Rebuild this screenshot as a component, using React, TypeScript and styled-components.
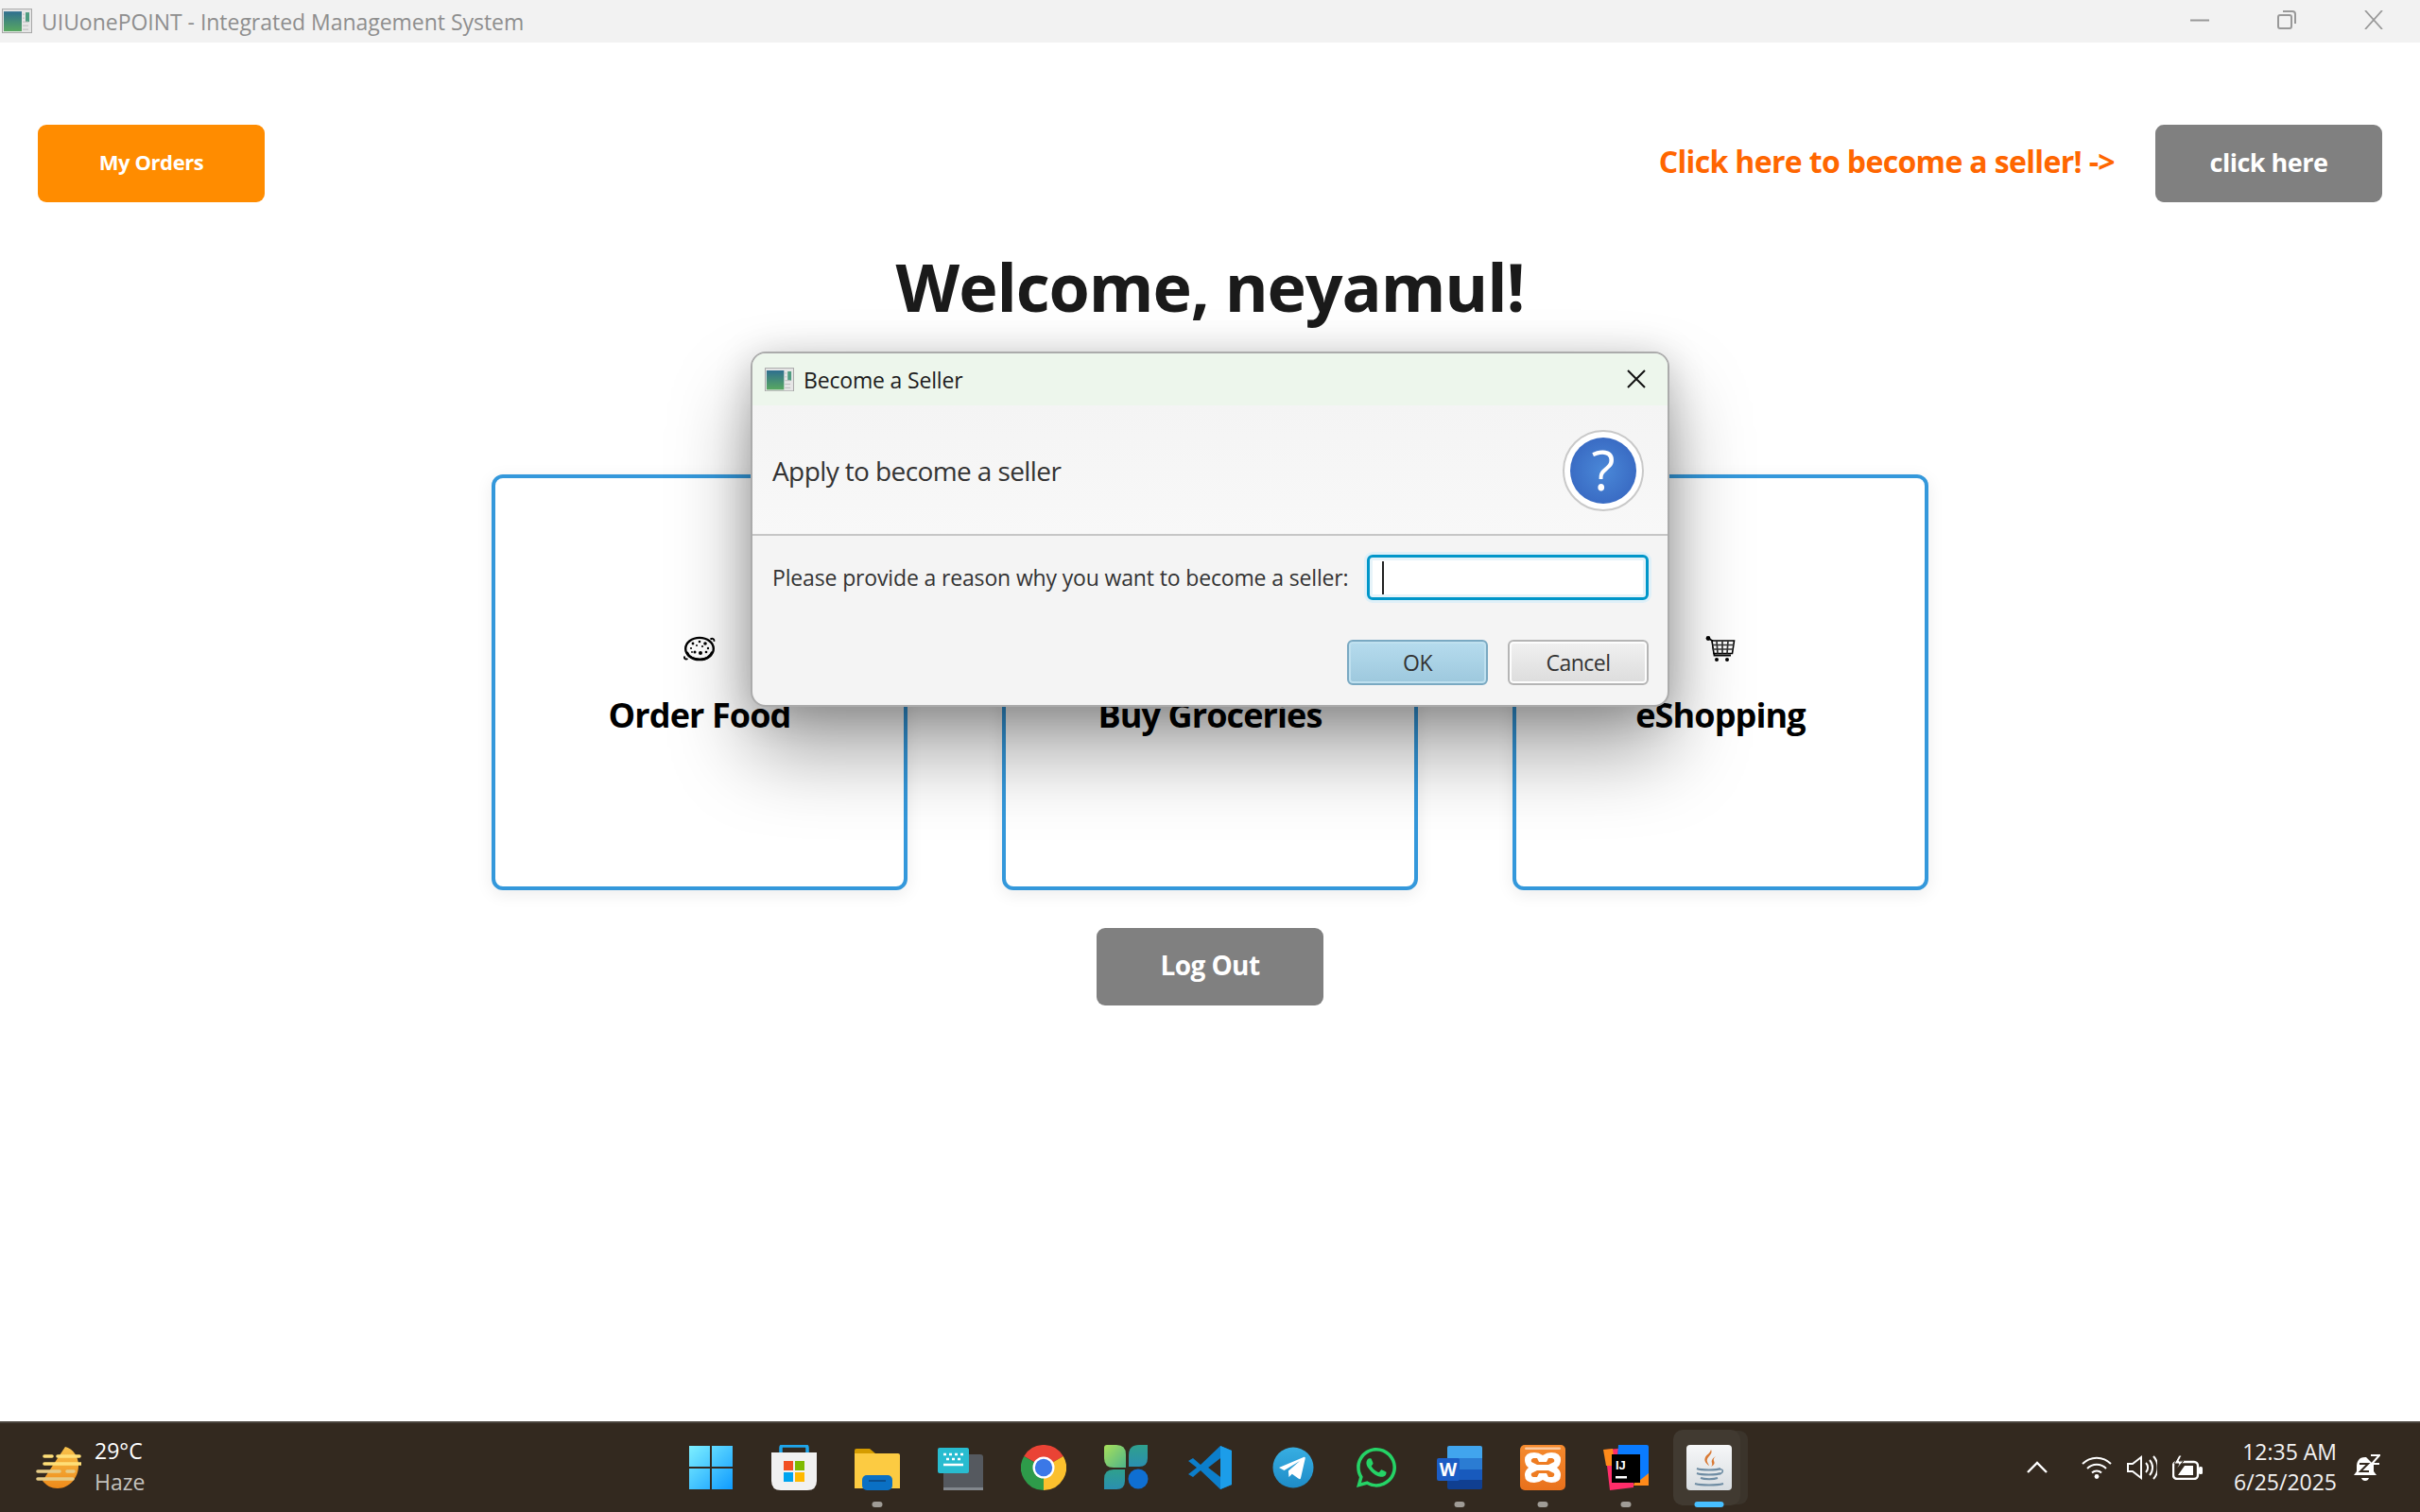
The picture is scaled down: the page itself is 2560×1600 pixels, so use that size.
import React from "react";
import styled, { createGlobalStyle } from "styled-components";
import { FaWhatsapp } from "react-icons/fa";

const FONT = `"Open Sans", "Noto Sans", "Liberation Sans", sans-serif`;

const Global = createGlobalStyle`
  html, body { margin: 0; padding: 0; background: #fff; }
  #root { height: 1600px; }
  * { box-sizing: border-box; }
`;

const Page = styled.div`
  position: relative;
  width: 2560px;
  height: 1600px;
  display: flex;
  flex-direction: column;
  overflow: hidden;
  font-family: ${FONT};
  background: #fff;
`;

const TitleBar = styled.header`
  height: 45px;
  flex: none;
  display: flex;
  align-items: center;
  background: #f2f2f2;
  padding: 0 3px 0 2px;
`;
const TitleText = styled.span`
  margin-left: 10px;
  font-size: 23px;
  letter-spacing: -0.03px;
  color: #8e8e8e;
`;
const WindowControls = styled.div`
  margin-left: auto;
  display: flex;
`;
const WindowControl = styled.div`
  width: 92px;
  height: 45px;
  display: flex;
  align-items: center;
  justify-content: center;
  padding-bottom: 4px;
`;

const Main = styled.main`
  flex: 1;
  display: flex;
  flex-direction: column;
  align-items: center;
  padding: 87px 40px 0;
`;
const TopRow = styled.div`
  width: 100%;
  display: flex;
  align-items: center;
  justify-content: space-between;
`;
const SellerGroup = styled.div`
  display: flex;
  align-items: center;
  gap: 43px;
`;
const SellerPrompt = styled.span`
  font-size: 32px;
  font-weight: 700;
  letter-spacing: -0.65px;
  color: #ff6600;
  margin-bottom: 5px;
`;
const ActionButton = styled.button<{ $bg: string; $size: number; $track?: number }>`
  width: 240px;
  height: 82px;
  border: 0;
  border-radius: 9px;
  background: ${(p) => p.$bg};
  color: #fff;
  font-family: ${FONT};
  font-weight: 700;
  font-size: ${(p) => p.$size}px;
  letter-spacing: ${(p) => p.$track ?? 0}px;
  padding: 0 0 4px;
`;
const Welcome = styled.h1`
  margin: 41px 0 0;
  font-size: 70px;
  line-height: 96px;
  font-weight: 700;
  letter-spacing: -1.1px;
  color: #1a1a1a;
`;
const CardRow = styled.div`
  margin-top: 151px;
  display: flex;
  gap: 100px;
`;
const Card = styled.section`
  width: 440px;
  height: 440px;
  border: 4px solid #3498db;
  border-radius: 12px;
  background: #fff;
  box-shadow: 0 4px 18px rgba(0, 0, 0, 0.08);
  display: flex;
  flex-direction: column;
  align-items: center;
  justify-content: center;
  padding: 12px 0 2px;
`;
const CardIcon = styled.div`
  height: 30px;
  display: flex;
  align-items: center;
  justify-content: center;
`;
const CardLabel = styled.div`
  margin-top: 30px;
  font-size: 36px;
  line-height: 50px;
  font-weight: 700;
  letter-spacing: -0.9px;
  color: #000;
`;
const LogOutRow = styled.div`
  margin-top: 40px;
`;

/* Dialog */
const Dialog = styled.div`
  position: absolute;
  left: 794px;
  top: 372px;
  width: 972px;
  height: 376px;
  border: 2px solid #ababab;
  border-radius: 16px;
  background: #f4f4f4;
  box-shadow: 0 48px 84px rgba(0, 0, 0, 0.36), 0 6px 40px rgba(0, 0, 0, 0.2);
  display: flex;
  flex-direction: column;
`;
const DialogHeader = styled.div`
  height: 55px;
  flex: none;
  display: flex;
  align-items: center;
  padding: 0 23px 0 13px;
  background: #edf6ec;
  border-radius: 14px 14px 0 0;
`;
const DialogTitle = styled.span`
  margin-left: 10px;
  font-size: 23px;
  letter-spacing: -0.17px;
  color: #1c1c1c;
`;
const DialogClose = styled.div`
  margin: 0 0 2px auto;
  display: flex;
`;
const Masthead = styled.div`
  height: 138px;
  flex: none;
  display: flex;
  align-items: center;
  justify-content: space-between;
  padding: 1px 25px 0 21px;
  border-bottom: 2px solid #c6c6c6;
  background: linear-gradient(#f4f4f4, #f8f8f8);
`;
const MastheadText = styled.span`
  font-size: 28px;
  letter-spacing: -0.6px;
  color: #333;
`;
const HelpBadge = styled.div`
  width: 86px;
  height: 86px;
  border-radius: 50%;
  border: 2px solid #c9c9c9;
  background: #fff;
  display: flex;
  align-items: center;
  justify-content: center;
`;
const HelpDisc = styled.div`
  width: 70px;
  height: 70px;
  border-radius: 50%;
  background: radial-gradient(circle, #4a88d8 0%, #3a6cc4 70%, #3465be 100%);
  color: #fff;
  font-size: 58px;
  line-height: 68px;
  font-weight: 400;
  text-align: center;
`;
const PromptRow = styled.div`
  margin-top: 20px;
  padding: 0 20px 0 21px;
  display: flex;
  align-items: center;
  justify-content: space-between;
`;
const PromptLabel = styled.span`
  font-size: 23px;
  letter-spacing: -0.15px;
  color: #333;
`;
const ReasonField = styled.div`
  width: 298px;
  height: 48px;
  border: 3px solid #0096c9;
  border-radius: 6px;
  background: #fff;
  box-shadow: 0 0 0 3px #dff0f8, inset 0 0 0 3px #e6f3f9;
  display: flex;
  align-items: center;
  padding-left: 13px;
`;
const Caret = styled.i`
  width: 2px;
  height: 35px;
  background: #222;
`;
const DialogButtons = styled.div`
  margin-top: 42px;
  padding: 0 20px;
  display: flex;
  justify-content: flex-end;
  gap: 21px;
`;
const DialogButton = styled.button<{ $primary?: boolean }>`
  width: 149px;
  height: 48px;
  padding: 0;
  border-radius: 6px;
  font-family: ${FONT};
  font-size: 23px;
  letter-spacing: -0.5px;
  color: #333;
  border: 2px solid ${(p) => (p.$primary ? "#7aa9c2" : "#b5b5b5")};
  background: ${(p) =>
    p.$primary
      ? "linear-gradient(#b6dcee, #9dc8dd)"
      : "linear-gradient(#f1f1f1, #dcdcdc)"};
  box-shadow: inset 0 0 0 2px ${(p) => (p.$primary ? "#bfe0ef" : "#fdfdfd")};
`;

/* Taskbar */
const Taskbar = styled.footer`
  height: 96px;
  flex: none;
  display: grid;
  grid-template-columns: 1fr auto 1fr;
  align-items: center;
  background: #33291f;
  border-top: 2px solid #4a443d;
`;
const Weather = styled.div`
  display: flex;
  align-items: center;
  gap: 14px;
  padding-left: 38px;
`;
const WeatherText = styled.div`
  display: flex;
  flex-direction: column;
  font-size: 23px;
  line-height: 33px;
  margin-bottom: 3px;
`;
const WeatherTemp = styled.span`
  color: #fff;
`;
const WeatherCond = styled.span`
  color: #c4c2be;
`;
const Dock = styled.div`
  display: flex;
`;
const DockItem = styled.div`
  position: relative;
  width: 88px;
  height: 92px;
  display: flex;
  align-items: center;
  justify-content: center;
`;
const DockPlate = styled.div`
  position: absolute;
  left: 6px;
  top: 6px;
  width: 71px;
  height: 80px;
  border-radius: 10px;
  background: #413a31;
  box-shadow: 9px 0 0 -1px #3b342b;
`;
const DockGlyph = styled.div`
  position: relative;
  width: 48px;
  height: 48px;
  display: flex;
`;
const DockDot = styled.span<{ $active?: boolean }>`
  position: absolute;
  left: 50%;
  bottom: 4px;
  transform: translateX(-50%);
  width: ${(p) => (p.$active ? 31 : 11)}px;
  height: 6px;
  border-radius: 3px;
  background: ${(p) => (p.$active ? "#47bfff" : "#a09c96")};
`;
const Tray = styled.div`
  display: flex;
  align-items: center;
  justify-content: flex-end;
  padding-right: 42px;
`;
const TrayIcons = styled.div`
  display: flex;
  align-items: center;
  gap: 16px;
  margin-right: 32px;
`;
const Chevron = styled.div`
  display: flex;
  margin-right: 35px;
`;
const Clock = styled.div`
  display: flex;
  flex-direction: column;
  align-items: flex-end;
  font-size: 23px;
  line-height: 32px;
  color: #f2f2f2;
  margin: 0 18px 3px 0;
`;

/* Drawn icons */
const AppGlyph = ({ size }: { size: number }) => (
  <svg width={size} height={size * 0.82} viewBox="0 0 32 26">
    <defs>
      <linearGradient id="ag" x1="0" y1="0" x2="0" y2="1">
        <stop offset="0" stopColor="#2f6f8f" />
        <stop offset="1" stopColor="#58a860" />
      </linearGradient>
    </defs>
    <rect x="0.5" y="0.5" width="31" height="25" fill="#e6e6e6" stroke="#a8a8a8" />
    <rect x="2" y="3" width="19" height="21" fill="url(#ag)" />
    <rect x="25" y="4" width="4" height="10" fill="#4f9d80" />
    <path d="M22 6h2M22 10h2M22 14h6M22 18h6M22 22h6" stroke="#bdbdbd" />
  </svg>
);

const PizzaIcon = () => (
  <svg width="34" height="28" viewBox="0 0 34 28">
    <path d="M1.5 21.5c-1.5 2 .5 3.7 3 2.6M28.5 3.5c2-1.6 4.5-.4 3.8 2.2" fill="none" stroke="#000" strokeWidth="1.8" />
    <ellipse cx="17" cy="13.5" rx="14.8" ry="11.6" fill="#fff" stroke="#000" strokeWidth="2.4" />
    <path d="M3.5 17c2 5.2 8 7.8 14 7.8s11-2.6 13-8" fill="none" stroke="#000" strokeWidth="2.6" />
    {[[10, 8, 1.4], [17, 6, 1.3], [23, 8, 1.8], [14, 10, 1], [20, 11, 1.1], [8, 13, 1.1], [26, 13, 1.2], [12, 17, 1.5], [18, 18, 2], [24, 17, 1.3], [9, 17, 0.9]].map(([x, y, r], i) => (
      <circle key={i} cx={x} cy={y} r={r} fill="#000" />
    ))}
  </svg>
);

const CartIcon = () => (
  <svg width="32" height="28" viewBox="0 0 32 28">
    <circle cx="3" cy="2.5" r="2.4" fill="#000" />
    <path d="M3 2.5l4.5 2.5 2 15.5H27" fill="none" stroke="#000" strokeWidth="1.8" />
    <path d="M7 5h23.5l-2 13.5H9z" fill="#fff" stroke="#000" strokeWidth="1.6" />
    <path d="M7.5 9.5h22.5M8 14h21.5M12 5l1 13.5M18 5v13.5M24 5l-1 13.5" stroke="#333" strokeWidth="1.7" />
    <circle cx="12" cy="25" r="2" fill="#000" />
    <circle cx="23" cy="25" r="2" fill="#000" />
  </svg>
);

const StartIcon = () => (
  <svg width="48" height="48" viewBox="0 0 48 48">
    <defs>
      <linearGradient id="st" x1="0" y1="0" x2="1" y2="1">
        <stop offset="0" stopColor="#7ef0ff" />
        <stop offset="1" stopColor="#0f9bff" />
      </linearGradient>
    </defs>
    <path d="M1 1h22v22H1zM25 1h22v22H25zM1 25h22v22H1zM25 25h22v22H25z" fill="url(#st)" />
  </svg>
);
const StoreIcon = () => (
  <svg width="48" height="48" viewBox="0 0 48 48">
    <path d="M10 8V3q0-2 2-2h24q2 0 2 2v5" fill="none" stroke="#1fa6ec" strokeWidth="3.5" />
    <path d="M0 8h48v30q0 10-10 10H10Q0 48 0 38z" fill="#f1f1f1" />
    <rect x="13" y="17" width="10" height="10" fill="#f25022" />
    <rect x="25" y="17" width="10" height="10" fill="#7fba00" />
    <rect x="13" y="29" width="10" height="10" fill="#00a4ef" />
    <rect x="25" y="29" width="10" height="10" fill="#ffb900" />
  </svg>
);
const FolderIcon = () => (
  <svg width="48" height="48" viewBox="0 0 48 48">
    <path d="M0 6q0-2 2-2h14l6 5h-22z" fill="#d59c00" />
    <path d="M0 9h46q2 0 2 2v35H0z" fill="#fccb42" />
    <rect x="8" y="32" width="32" height="16" rx="5" fill="#0a70c4" />
    <rect x="15" y="37" width="18" height="2" fill="#0b4f8d" />
  </svg>
);
const KeyboardIcon = () => (
  <svg width="48" height="48" viewBox="0 0 48 48">
    <rect x="6" y="10" width="42" height="38" rx="3" fill="#55595f" />
    <rect x="6" y="45" width="42" height="3" fill="#82878d" />
    <rect x="0" y="3" width="33" height="27" rx="2" fill="#28bcd0" />
    <path d="M6 10h3M12 10h3M18 10h3M24 10h3M9 15h3M15 15h3M21 15h3M6 21h21" stroke="#fff" strokeWidth="2.4" />
  </svg>
);
const ChromeIcon = () => (
  <svg width="48" height="48" viewBox="0 0 48 48">
    <path d="M24 24L3.2 12A24 24 0 0 1 44.8 12z" fill="#ea4335" />
    <path d="M24 24L44.8 12A24 24 0 0 1 24 48z" fill="#fbc02d" />
    <path d="M24 24L24 48A24 24 0 0 1 3.2 12z" fill="#2e9b4a" />
    <circle cx="24" cy="24" r="11.5" fill="#fff" />
    <circle cx="24" cy="24" r="9.2" fill="#3b78e7" />
  </svg>
);
const CopilotIcon = () => (
  <svg width="48" height="48" viewBox="0 0 48 48">
    <defs>
      <linearGradient id="cp1" x1="0" y1="0" x2="1" y2="1">
        <stop offset="0" stopColor="#a8e05a" />
        <stop offset="1" stopColor="#4fb58a" />
      </linearGradient>
      <linearGradient id="cp2" x1="0" y1="0" x2="0" y2="1">
        <stop offset="0" stopColor="#2fa08d" />
        <stop offset="1" stopColor="#2a8fb0" />
      </linearGradient>
    </defs>
    <path d="M0 3q0-3 3-3h10q10 0 10 10v14H10Q0 24 0 14z" fill="url(#cp1)" />
    <path d="M46 0v14q0 9-9 9H26V11Q26 0 37 0z" fill="url(#cp2)" />
    <path d="M0 47V36q0-10 10-10h12v12q0 9-9 9z" fill="url(#cp2)" />
    <circle cx="36" cy="36" r="10.5" fill="#0f6fd2" />
  </svg>
);
const VSCodeIcon = () => (
  <svg width="48" height="48" viewBox="0 0 48 48">
    <path d="M35 1L47 6v36l-12 5L14 27l-8 7-5-3 9-7-9-7 5-3 8 7z" fill="#0c7ecb" />
    <path d="M35 1L47 6v36l-12 5V34l-13-10 13-10z" fill="#1ea1ec" opacity="0.9" />
    <path d="M35 14L22 24l13 10z" fill="#33291f" />
  </svg>
);
const TelegramIcon = () => (
  <svg width="48" height="48" viewBox="0 0 48 48">
    <defs>
      <linearGradient id="tg" x1="0" y1="0" x2="0" y2="1">
        <stop offset="0" stopColor="#37aee2" />
        <stop offset="1" stopColor="#1e8cc8" />
      </linearGradient>
    </defs>
    <circle cx="24" cy="24" r="21.5" fill="url(#tg)" />
    <path d="M9 24l26-11c1.400-.500 2 .300 1.700 1.600L32 35c-.300 1.300-1.200 1.500-2.200.8l-7-5.100-3.300 3.200-.6-6.400L31 17l-16.500 10z" fill="#fff" />
  </svg>
);
const WordIcon = () => (
  <svg width="48" height="48" viewBox="0 0 48 48">
    <path d="M11 3q0-2 2-2h33q2 0 2 2v11H11z" fill="#41a5ee" />
    <rect x="11" y="14" width="37" height="12" fill="#2b7cd3" />
    <rect x="11" y="26" width="37" height="11" fill="#185abd" />
    <path d="M11 37h37v8q0 2-2 2H13q-2 0-2-2z" fill="#103f91" />
    <rect x="0" y="14" width="24" height="24" rx="2" fill="#1b5cc4" />
    <text x="12" y="32.500" textAnchor="middle" fontFamily="Open Sans, sans-serif" fontWeight="700" fontSize="19" fill="#fff">W</text>
  </svg>
);
const XamppIcon = () => (
  <svg width="48" height="48" viewBox="0 0 48 48">
    <defs>
      <linearGradient id="xa" x1="0" y1="0" x2="0" y2="1">
        <stop offset="0" stopColor="#f58a2e" />
        <stop offset="1" stopColor="#e9711c" />
      </linearGradient>
    </defs>
    <rect width="48" height="48" rx="5" fill="url(#xa)" />
    <rect x="5" y="2.500" width="38" height="2.500" rx="1.200" fill="#fbc9a0" />
    <path d="M15 8q-10 0-10 8 0 5 4 8-4 3-4 8 0 8 10 8 5 0 9-3 4 3 9 3 10 0 10-8 0-5-4-8 4-3 4-8 0-8-10-8-5 0-9 3-4-3-9-3z" fill="#fff" />
    <path d="M14 14h4l2 4h8l2-4h4q3 1 2 4l-6 3H18l-6-3q-1-3 2-4zM18 27h12l6 3q1 3-2 4h-4l-2-4h-8l-2 4h-4q-3-1-2-4z" fill="#ee7c22" />
  </svg>
);
const IdeaIcon = () => (
  <svg width="48" height="48" viewBox="0 0 48 48">
    <path d="M2 5l14-1-2 30 18 0v11l-25 3z" fill="#ff2d6a" />
    <path d="M0 5l10-1 2 18H3z" fill="#ff8a1a" />
    <path d="M36 30h12v13H32z" fill="#ff8a1a" />
    <path d="M16 0h30q2 0 2 2v28L38 38 14 26z" fill="#0a7bff" />
    <rect x="9" y="10" width="30" height="30" fill="#000" />
    <text x="13" y="26" fontFamily="Liberation Sans, sans-serif" fontWeight="700" fontSize="13" fill="#fff">IJ</text>
    <rect x="13" y="33" width="12" height="2.500" fill="#fff" />
  </svg>
);
const JavaIcon = () => (
  <svg width="48" height="48" viewBox="0 0 48 48">
    <defs>
      <linearGradient id="jv" x1="0" y1="0" x2="0" y2="1">
        <stop offset="0" stopColor="#f6f7f8" />
        <stop offset="1" stopColor="#d8dde1" />
      </linearGradient>
    </defs>
    <rect width="48" height="48" rx="4" fill="url(#jv)" />
    <path d="M26 5c3 5-6 8-4 13 .7 2 2 3 2 4-3-2-6-5-4-9 1.500-3 5-4 6-8zM31 12c-3 2-5 4-4 7 .5 2 0 3-1 4 4-2 4-4 3-6-.6-2 0-3 2-5z" fill="#d97a35" />
    <path d="M11 25c5 2 21 2 25 0M11 30c5 2 21 2 25 0M15 35c4 1.500 14 1.500 18 0M9 41c7 2 23 2 30 0" fill="none" stroke="#6e8ca3" strokeWidth="2" />
    <path d="M35 26c4-1 5 3 0 5" fill="none" stroke="#6e8ca3" strokeWidth="1.500" />
  </svg>
);
const WeatherIcon = () => (
  <svg width="48" height="44" viewBox="0 0 48 44">
    <defs>
      <linearGradient id="wx" x1="0" y1="0" x2="0" y2="1">
        <stop offset="0" stopColor="#f8c24b" />
        <stop offset="1" stopColor="#ee8a1a" />
      </linearGradient>
    </defs>
    <path d="M31 0c8 2 14 10 14 20 0 13-10 24-22 24-7 0-12-3-16-8z" fill="url(#wx)" />
    <path d="M9 10h8M23 10h23M9 18h40" stroke="#ffdf78" strokeWidth="3.600" strokeLinecap="round" />
    <path d="M2 26h23M33 26h7M2 34h37" stroke="#e6cb86" strokeWidth="3.600" strokeLinecap="round" />
  </svg>
);

const dockIcons = [
  { key: "start", el: <StartIcon /> },
  { key: "store", el: <StoreIcon /> },
  { key: "files", el: <FolderIcon />, dot: true },
  { key: "keys", el: <KeyboardIcon /> },
  { key: "chrome", el: <ChromeIcon /> },
  { key: "copilot", el: <CopilotIcon /> },
  { key: "vscode", el: <VSCodeIcon /> },
  { key: "telegram", el: <TelegramIcon /> },
  { key: "whatsapp", el: <FaWhatsapp size={48} color="#25d366" /> },
  { key: "word", el: <WordIcon />, dot: true },
  { key: "xampp", el: <XamppIcon />, dot: true },
  { key: "idea", el: <IdeaIcon />, dot: true },
  { key: "java", el: <JavaIcon />, active: true },
];

export default function App() {
  return (
    <Page>
      <Global />
      <TitleBar>
        <AppGlyph size={32} />
        <TitleText>UIUonePOINT - Integrated Management System</TitleText>
        <WindowControls>
          <WindowControl>
            <svg width="20" height="20" viewBox="0 0 20 20"><path d="M0 10.500h20" stroke="#999" strokeWidth="2" /></svg>
          </WindowControl>
          <WindowControl>
            <svg width="20" height="20" viewBox="0 0 20 20" fill="none" stroke="#999" strokeWidth="2">
              <rect x="1" y="5" width="14" height="14" rx="2" />
              <path d="M6 1h10q3 0 3 3v10" />
            </svg>
          </WindowControl>
          <WindowControl>
            <svg width="20" height="20" viewBox="0 0 20 20"><path d="M1 0l18 20M19 0L1 20" stroke="#999" strokeWidth="1.800" /></svg>
          </WindowControl>
        </WindowControls>
      </TitleBar>

      <Main>
        <TopRow>
          <ActionButton $bg="#ff8c00" $size={22} $track={-0.4}>My Orders</ActionButton>
          <SellerGroup>
            <SellerPrompt>Click here to become a seller! -&gt;</SellerPrompt>
            <ActionButton $bg="#808080" $size={27} $track={-0.5}>click here</ActionButton>
          </SellerGroup>
        </TopRow>
        <Welcome>Welcome, neyamul!</Welcome>
        <CardRow>
          <Card>
            <CardIcon><PizzaIcon /></CardIcon>
            <CardLabel>Order Food</CardLabel>
          </Card>
          <Card>
            <CardIcon />
            <CardLabel>Buy Groceries</CardLabel>
          </Card>
          <Card>
            <CardIcon><CartIcon /></CardIcon>
            <CardLabel>eShopping</CardLabel>
          </Card>
        </CardRow>
        <LogOutRow>
          <ActionButton $bg="#808080" $size={28} $track={-0.6}>Log Out</ActionButton>
        </LogOutRow>
      </Main>

      <Taskbar>
        <Weather>
          <WeatherIcon />
          <WeatherText>
            <WeatherTemp>29°C</WeatherTemp>
            <WeatherCond>Haze</WeatherCond>
          </WeatherText>
        </Weather>
        <Dock>
          {dockIcons.map((d) => (
            <DockItem key={d.key}>
              {d.active && <DockPlate />}
              <DockGlyph>{d.el}</DockGlyph>
              {(d.dot || d.active) && <DockDot $active={d.active} />}
            </DockItem>
          ))}
        </Dock>
        <Tray>
          <Chevron>
            <svg width="24" height="14" viewBox="0 0 24 14"><path d="M2 12l10-10 10 10" fill="none" stroke="#fff" strokeWidth="2.400" /></svg>
          </Chevron>
          <TrayIcons>
            <svg width="32" height="24" viewBox="0 0 32 24" fill="none" stroke="#fff" strokeWidth="2">
              <path d="M1 8a21 21 0 0 1 30 0M6 13a14 14 0 0 1 20 0M11 17.500a7 7 0 0 1 10 0" />
              <circle cx="16" cy="21.500" r="2.400" fill="#fff" stroke="none" />
            </svg>
            <svg width="32" height="28" viewBox="0 0 32 28" fill="none" stroke="#fff" strokeWidth="2">
              <path d="M1 10h5l9-7v22l-9-7H1z" />
              <path d="M20 9a7 7 0 0 1 0 10M24 6a12 12 0 0 1 0 16M28 2a18 18 0 0 1 0 24" />
            </svg>
            <svg width="33" height="26" viewBox="0 0 33 26">
              <rect x="1" y="7" width="26" height="18" rx="4" fill="none" stroke="#fff" strokeWidth="2.400" />
              <path d="M6 21l7-10h9v10z" fill="#fff" />
              <rect x="28" y="12" width="4" height="8" rx="1.500" fill="#fff" />
              <path d="M7 0L2 9h5l-3 6 8-9H7l3-6z" fill="#fff" stroke="#33291f" strokeWidth="1" />
            </svg>
          </TrayIcons>
          <Clock>
            <span>12:35 AM</span>
            <span>6/25/2025</span>
          </Clock>
          <svg width="28" height="30" viewBox="0 0 28 30">
            <path d="M12 4C5 4 3 9 3 14v5l-3 4h24l-3-4v-7L13 4z" fill="#fff" />
            <path d="M8 26h8q-1 3-4 3t-4-3z" fill="#fff" />
            <path d="M6 11h9l-8 8h9" fill="none" stroke="#33291f" strokeWidth="2" />
            <path d="M18 2h9l-8 9h8" fill="none" stroke="#fff" strokeWidth="2" />
          </svg>
        </Tray>
      </Taskbar>

      <Dialog>
        <DialogHeader>
          <AppGlyph size={31} />
          <DialogTitle>Become a Seller</DialogTitle>
          <DialogClose>
            <svg width="20" height="20" viewBox="0 0 20 20"><path d="M1 1l18 18M19 1L1 19" stroke="#111" strokeWidth="2" /></svg>
          </DialogClose>
        </DialogHeader>
        <Masthead>
          <MastheadText>Apply to become a seller</MastheadText>
          <HelpBadge><HelpDisc>?</HelpDisc></HelpBadge>
        </Masthead>
        <PromptRow>
          <PromptLabel>Please provide a reason why you want to become a seller:</PromptLabel>
          <ReasonField><Caret /></ReasonField>
        </PromptRow>
        <DialogButtons>
          <DialogButton $primary>OK</DialogButton>
          <DialogButton>Cancel</DialogButton>
        </DialogButtons>
      </Dialog>
    </Page>
  );
}
